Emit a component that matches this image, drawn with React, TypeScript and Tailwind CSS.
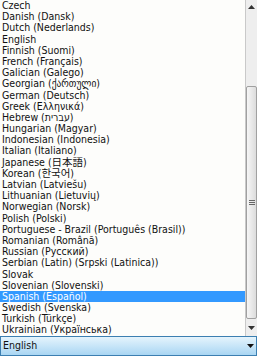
import React from 'react';

const languages = [
  'Czech',
  'Danish (Dansk)',
  'Dutch (Nederlands)',
  'English',
  'Finnish (Suomi)',
  'French (Français)',
  'Galician (Galego)',
  'Georgian (ქართული)',
  'German (Deutsch)',
  'Greek (Ελληνικά)',
  'Hebrew (עברית)',
  'Hungarian (Magyar)',
  'Indonesian (Indonesia)',
  'Italian (Italiano)',
  'Japanese (日本語)',
  'Korean (한국어)',
  'Latvian (Latviešu)',
  'Lithuanian (Lietuvių)',
  'Norwegian (Norsk)',
  'Polish (Polski)',
  'Portuguese - Brazil (Português (Brasil))',
  'Romanian (Română)',
  'Russian (Русский)',
  'Serbian (Latin) (Srpski (Latinica))',
  'Slovak',
  'Slovenian (Slovenski)',
  'Spanish (Español)',
  'Swedish (Svenska)',
  'Turkish (Türkçe)',
  'Ukrainian (Українська)',
];

const selected = 'Spanish (Español)';

export default function App() {
  return (
    <div
      className="flex h-[356px] w-[257px] flex-col overflow-hidden bg-white text-[10.5px] text-[#111]"
      style={{ fontFamily: '"DejaVu Sans Condensed", "Liberation Sans", "DejaVu Sans", "Noto Sans CJK JP", sans-serif' }}
    >
      <div className="flex h-[336px]">
        <ul className="flex-1 overflow-hidden bg-[#fdfdfb]">
          {languages.map((lang) => (
            <li
              key={lang}
              className={
                lang === selected
                  ? 'h-[11.2px] whitespace-nowrap bg-[#3399ff] pl-[2px] leading-[11.2px] text-white'
                  : 'h-[11.2px] whitespace-nowrap pl-[2px] leading-[11.2px]'
              }
            >
              {lang}
            </li>
          ))}
        </ul>
        <div className="flex w-[12px] flex-col border-l border-[#c9c9c9] bg-[#eeeeee]">
          <div className="flex h-[14px] items-center justify-center">
            <svg width="7" height="4" viewBox="0 0 7 4">
              <path d="M0 4 L3.5 0 L7 4 Z" fill="#333" />
            </svg>
          </div>
          <div className="h-[72px]" />
          <div className="flex h-[233px] items-center justify-center rounded-[2px] border border-[#a0a0a0] bg-gradient-to-r from-[#f6f6f6] to-[#dcdcdc]">
            <div className="flex flex-col gap-[1px]">
              <div className="h-px w-[6px] bg-[#666]" />
              <div className="h-px w-[6px] bg-[#666]" />
              <div className="h-px w-[6px] bg-[#666]" />
            </div>
          </div>
          <div className="flex flex-1 items-center justify-center">
            <svg width="7" height="4" viewBox="0 0 7 4">
              <path d="M0 0 L7 0 L3.5 4 Z" fill="#333" />
            </svg>
          </div>
        </div>
      </div>
      <div className="flex h-[20px] items-center border border-[#3c7fb1] bg-gradient-to-b from-[#e5f4fc] to-[#a9d6f3] pl-[2px]">
        <span className="flex-1">English</span>
        <svg className="mr-[2px]" width="7" height="4" viewBox="0 0 7 4">
          <path d="M0 0 L7 0 L3.5 4 Z" fill="#111" />
        </svg>
      </div>
    </div>
  );
}
